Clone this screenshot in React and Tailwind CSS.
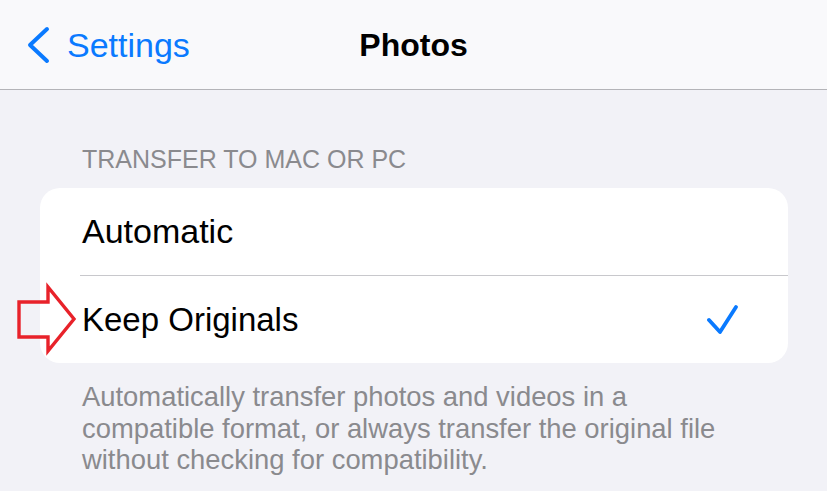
import React from "react";

export default function App() {
  return (
    <div
      className="relative w-[827px] h-[491px] overflow-hidden bg-[#f2f2f7]"
      style={{ fontFamily: '"Liberation Sans", Arial, sans-serif' }}
    >
      <div className="h-[90px] bg-[#f9f9fb] border-b border-[#b4b4b8] grid grid-cols-[1fr_auto_1fr] items-center">
        <div className="flex items-center pl-[26px] text-[#0a7aff]">
          <svg width="24" height="38" viewBox="0 0 24 38" className="mt-[1px]">
            <polyline
              points="21,3 4,19 21,35"
              fill="none"
              stroke="#0a7aff"
              strokeWidth="4"
              strokeLinecap="round"
              strokeLinejoin="round"
            />
          </svg>
          <span className="ml-[17px] text-[34px] leading-none">Settings</span>
        </div>
        <div className="text-[32px] font-bold leading-none text-black">Photos</div>
        <div />
      </div>

      <div className="pt-[54px] pl-[82px] text-[25px] leading-[30px] text-[#8a8a8e]">
        TRANSFER TO MAC OR PC
      </div>

      <div className="mt-[14px] mx-[40px] w-[748px] bg-white rounded-[20px] overflow-hidden">
        <div className="h-[87px] flex items-center pl-[42px] text-[34px] text-black">
          Automatic
        </div>
        <div className="ml-[40px] h-px bg-[#c8c8cc]" />
        <div className="h-[87px] flex items-center justify-between pl-[42px] pr-[49px] text-[33px] text-black">
          <span>Keep Originals</span>
          <svg width="32" height="30" viewBox="0 0 32 30">
            <polyline
              points="2,15 13,27 29,2"
              fill="none"
              stroke="#0a7aff"
              strokeWidth="3.8"
              strokeLinecap="round"
              strokeLinejoin="round"
            />
          </svg>
        </div>
      </div>

      <div className="mt-[18px] pl-[82px] text-[27.4px] leading-[31.5px] text-[#8a8a8e]">
        Automatically transfer photos and videos in a
        <br />
        compatible format, or always transfer the original file
        <br />
        without checking for compatibility.
      </div>

      <svg
        className="absolute left-0 top-0"
        width="90"
        height="491"
        viewBox="0 0 90 491"
      >
        <polygon
          points="19,302 48,302 48,287 74,319 48,351 48,337 19,337"
          fill="none"
          stroke="#e8222a"
          strokeWidth="3.4"
          strokeLinejoin="miter"
        />
      </svg>
    </div>
  );
}
